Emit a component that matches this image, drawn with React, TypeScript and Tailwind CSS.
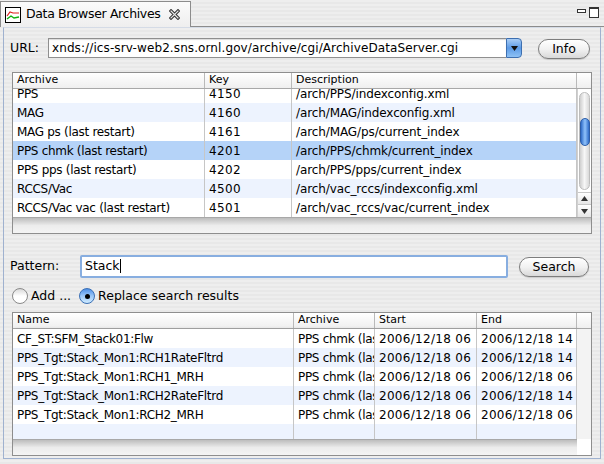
import React from "react"

const archives = [
  ["PPS", "4150", "/arch/PPS/indexconfig.xml"],
  ["MAG", "4160", "/arch/MAG/indexconfig.xml"],
  ["MAG ps (last restart)", "4161", "/arch/MAG/ps/current_index"],
  ["PPS chmk (last restart)", "4201", "/arch/PPS/chmk/current_index"],
  ["PPS pps (last restart)", "4202", "/arch/PPS/pps/current_index"],
  ["RCCS/Vac", "4500", "/arch/vac_rccs/indexconfig.xml"],
  ["RCCS/Vac vac (last restart)", "4501", "/arch/vac_rccs/vac/current_index"],
]

const results = [
  ["CF_ST:SFM_Stack01:Flw", "PPS chmk (last restart)", "2006/12/18 06", "2006/12/18 14"],
  ["PPS_Tgt:Stack_Mon1:RCH1RateFltrd", "PPS chmk (last restart)", "2006/12/18 06", "2006/12/18 14"],
  ["PPS_Tgt:Stack_Mon1:RCH1_MRH", "PPS chmk (last restart)", "2006/12/18 06", "2006/12/18 06"],
  ["PPS_Tgt:Stack_Mon1:RCH2RateFltrd", "PPS chmk (last restart)", "2006/12/18 06", "2006/12/18 14"],
  ["PPS_Tgt:Stack_Mon1:RCH2_MRH", "PPS chmk (last restart)", "2006/12/18 06", "2006/12/18 06"],
  ["", "", "", ""],
]

function ViewIcon() {
  return (
    <svg width="16" height="16" viewBox="0 0 16 16">
      <rect x="0.5" y="0.5" width="15" height="15" fill="#fff" stroke="#000" />
      <polyline points="2,9 5,5 8,6 14,6" fill="none" stroke="#e02020" strokeWidth="1.2" />
      <polyline points="2,12 6,9 9,11 14,10" fill="none" stroke="#10b010" strokeWidth="1.4" />
    </svg>
  )
}

function CloseIcon() {
  return (
    <svg width="11" height="11" viewBox="0 0 11 11">
      <path d="M2 2 L9 9 M9 2 L2 9" stroke="#333" strokeWidth="3.2" strokeLinecap="square" />
      <path d="M2 2 L9 9 M9 2 L2 9" stroke="#e8e8e8" strokeWidth="1.2" strokeLinecap="square" />
    </svg>
  )
}

function AquaButton({ label, w }: { label: string; w: string }) {
  return (
    <button
      className={`${w} h-[20px] rounded-full border border-[#7d7d7d] bg-linear-to-b from-white via-[#f2f2f2] to-[#d9d9d9] text-[12.5px] leading-none text-black shadow-[0_1px_1px_rgba(0,0,0,0.15)]`}
    >
      {label}
    </button>
  )
}

function Radio({ checked }: { checked?: boolean }) {
  return checked ? (
    <span className="w-[16px] h-[16px] rounded-full border border-[#3a6fb5] bg-linear-to-b from-[#4d8fe6] via-[#9cc7f7] to-[#d0ecff] flex items-center justify-center">
      <span className="w-[5px] h-[5px] rounded-full bg-black" />
    </span>
  ) : (
    <span className="w-[16px] h-[16px] rounded-full border border-[#8a8a8a] bg-linear-to-b from-[#d8d8d8] via-white to-white" />
  )
}

function HeaderCell({ label, w, last }: { label: string; w: string; last?: boolean }) {
  return (
    <div
      className={`${w} h-full shrink-0 px-[4px] flex items-center text-[11px] text-black ${
        last ? "" : "border-r border-[#b9b9b9]"
      }`}
    >
      {label}
    </div>
  )
}

function RowCell({ text, w, track }: { text: string; w: string; track: string }) {
  return (
    <div
      className={`${w} h-full shrink-0 border-r border-[#c6c6c6] overflow-hidden whitespace-nowrap flex items-center`}
    >
      <span className={`pl-[4px] ${track}`}>{text}</span>
    </div>
  )
}

function HScrollTrack() {
  return <div className="h-[16px] bg-linear-to-b from-[#bdbdbd] via-[#ececec] to-[#f4f4f4] border-t border-[#a8a8a8]" />
}

export default function App() {
  const archCols = ["w-[192px]", "w-[87px]", "w-[285px]"]
  const archTrack = ["tracking-[-0.3px]", "tracking-[0.4px]", "tracking-[-0.1px]"]
  const resCols = ["w-[281px]", "w-[81px]", "w-[102px]", "w-[100px]"]
  const resTrack = ["tracking-[-0.3px]", "tracking-[-0.3px]", "tracking-[0.3px]", "tracking-[0.3px]"]

  return (
    <div className="w-[604px] h-[464px] overflow-hidden font-['DejaVu_Sans',sans-serif] text-black bg-[repeating-linear-gradient(180deg,#eeeeee_0px,#eeeeee_2px,#e8e8e8_2px,#e8e8e8_4px)]">
      {/* Tab bar */}
      <div className="h-[27px] flex">
        <div className="w-[191px] h-[26px] mt-[1px] flex items-center pl-[4px] border-l border-t border-r border-[#8c8c8c] bg-linear-to-b from-[#fbfbfb] to-[#eeeeee] whitespace-nowrap">
          <ViewIcon />
          <span className="ml-[5px] text-[12.5px] tracking-[-0.35px]">Data Browser Archives</span>
          <span className="ml-[9px] flex items-center">
            <CloseIcon />
          </span>
        </div>
        <div className="flex-1 h-full border-b border-[#8c8c8c] flex items-start justify-end gap-[3px] pt-[7px] pr-[5px]">
          <span className="w-[9px] h-[4px] mt-[2px] border border-[#333] bg-white" />
          <span className="w-[10px] h-[11px] border border-[#333] border-t-2 bg-white" />
        </div>
      </div>

      {/* View body */}
      <div className="ml-[3px] w-[598px] h-[432px] border-x border-b border-[#9fb1cf] border-t border-t-[#d4dbe6] flex flex-col">
        {/* URL row */}
        <div className="mt-[10px] h-[20px] flex items-center">
          <span className="ml-[6px] w-[38px] text-[12.5px]">URL:</span>
          <div className="w-[474px] h-[20px] flex">
            <div className="flex-1 h-full border border-[#8f8f8f] border-r-0 bg-white flex items-center pl-[3px] text-[12px] tracking-[0.1px] whitespace-nowrap overflow-hidden shadow-[inset_0_1px_1px_rgba(0,0,0,0.15)]">
              xnds://ics-srv-web2.sns.ornl.gov/archive/cgi/ArchiveDataServer.cgi
            </div>
            <div className="w-[16px] h-full rounded-r-[4px] border border-[#3d6fb0] bg-linear-to-b from-[#a9cdf5] via-[#5b9ae6] to-[#8ec1f4] flex items-center justify-center">
              <svg width="7" height="5" viewBox="0 0 7 5">
                <polygon points="0,0 7,0 3.5,5" fill="#111" />
              </svg>
            </div>
          </div>
          <div className="ml-[16px]">
            <AquaButton label="Info" w="w-[52px]" />
          </div>
        </div>

        {/* Archive table */}
        <div className="mt-[14px] ml-[8px] w-[580px] h-[162px] border border-[#8e8e8e] bg-white flex flex-col">
          <div className="h-[16px] flex border-b border-[#a8a8a8] bg-linear-to-b from-white to-[#efefef]">
            <HeaderCell label="Archive" w={archCols[0]} />
            <HeaderCell label="Key" w={archCols[1]} />
            <HeaderCell label="Description" w={archCols[2]} />
            <HeaderCell label="" w="w-[14px]" last />
          </div>
          <div className="flex h-[128px]">
            <div className="w-[564px] h-full overflow-hidden">
              <div className="-mt-[5px]">
                {archives.map((r, i) => (
                  <div
                    key={r[1]}
                    className={`h-[19px] flex text-[12px] ${
                      i === 3 ? "bg-[#b5d3f8]" : i % 2 === 1 ? "bg-[#edf3fe]" : "bg-white"
                    }`}
                  >
                    {r.map((c, j) => (
                      <RowCell key={j} text={c} w={archCols[j]} track={archTrack[j]} />
                    ))}
                  </div>
                ))}
              </div>
            </div>
            {/* vertical scrollbar */}
            <div className="w-[14px] h-full flex flex-col bg-white border-l border-[#d0d0d0]">
              <div className="mt-[3px] mx-[1px] h-[98px] rounded-full bg-linear-to-r from-[#cfcfcf] via-[#f7f7f7] to-[#d9d9d9] border border-[#bdbdbd] flex flex-col items-center pt-[25px]">
                <div className="w-[10px] h-[28px] rounded-full border border-[#2d5ea8] bg-linear-to-r from-[#2f6cc8] via-[#8fc2fb] to-[#2f6cc8]" />
              </div>
              <div className="mt-[2px] h-[13px] flex items-center justify-center border-y border-[#c8c8c8] bg-linear-to-b from-white to-[#e6e6e6]">
                <svg width="7" height="5" viewBox="0 0 7 5"><polygon points="3.5,0 7,5 0,5" fill="#333" /></svg>
              </div>
              <div className="h-[12px] flex items-center justify-center bg-linear-to-b from-white to-[#e6e6e6]">
                <svg width="7" height="5" viewBox="0 0 7 5"><polygon points="0,0 7,0 3.5,5" fill="#333" /></svg>
              </div>
            </div>
          </div>
          <HScrollTrack />
        </div>

        {/* Pattern row */}
        <div className="mt-[20px] h-[24px] flex items-center">
          <span className="ml-[6px] w-[70px] text-[12.5px]">Pattern:</span>
          <div className="w-[428px] h-[23px] rounded-[2px] border-[2px] border-[#88aee0] bg-white flex items-center pl-[3px] text-[12.5px]">
            Stack<span className="w-px h-[14px] bg-black" />
          </div>
          <div className="ml-[11px]">
            <AquaButton label="Search" w="w-[70px]" />
          </div>
        </div>

        {/* Radio row */}
        <div className="mt-[9px] h-[18px] flex items-center text-[12.5px]">
          <div className="ml-[8px] flex items-center gap-[3px]">
            <Radio />
            <span>Add ...</span>
          </div>
          <div className="ml-[8px] flex items-center gap-[3px]">
            <Radio checked />
            <span>Replace search results</span>
          </div>
        </div>

        {/* Results table */}
        <div className="mt-[7px] ml-[8px] w-[580px] h-[144px] border border-[#8e8e8e] bg-white flex flex-col">
          <div className="h-[16px] flex border-b border-[#a8a8a8] bg-linear-to-b from-white to-[#efefef]">
            <HeaderCell label="Name" w={resCols[0]} />
            <HeaderCell label="Archive" w={resCols[1]} />
            <HeaderCell label="Start" w={resCols[2]} />
            <HeaderCell label="End" w={resCols[3]} />
            <HeaderCell label="" w="w-[14px]" last />
          </div>
          <div className="flex h-[110px]">
            <div className="w-[564px] h-full overflow-hidden shadow-[2px_0_3px_rgba(0,0,0,0.15)]">
              {results.map((r, i) => (
                <div key={i} className={`h-[19px] flex text-[12px] ${i % 2 === 1 ? "bg-[#edf3fe]" : "bg-white"}`}>
                  {r.map((c, j) => (
                    <RowCell key={j} text={c} w={resCols[j]} track={resTrack[j]} />
                  ))}
                </div>
              ))}
            </div>
            <div className="w-[14px] h-full bg-[#f3f3f3]" />
          </div>
          <div className="flex">
            <div className="flex-1">
              <HScrollTrack />
            </div>
            <div className="w-[14px] h-[16px] bg-white" />
          </div>
        </div>
      </div>
    </div>
  )
}
